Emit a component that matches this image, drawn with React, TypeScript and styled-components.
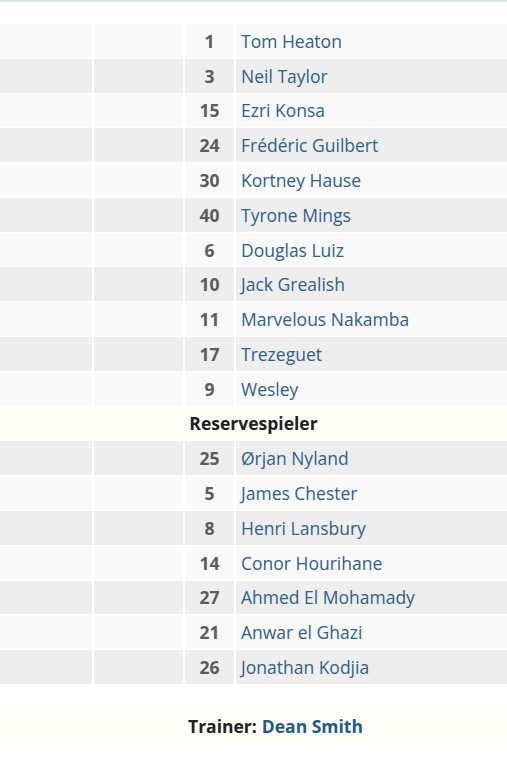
import React from "react";
import styled, { createGlobalStyle } from "styled-components";

const Global = createGlobalStyle`
  html, body { margin: 0; padding: 0; background: #fff; }
  body { font-family: "Open Sans", "Liberation Sans", sans-serif; }
`;

const Page = styled.div`
  width: 507px;
  border-top: 2px solid #d8e7ee;
  padding-top: 22px;
  box-sizing: border-box;
`;

const Table = styled.div`
  display: flex;
  flex-direction: column;
  gap: 1px;
`;

const Row = styled.div<{ $even: boolean }>`
  display: grid;
  grid-template-columns: 92px 89px 49px 271px;
  column-gap: 2px;
  height: 33.79px;
  & > div {
    background: ${(p) => (p.$even ? "#eeeeee" : "#f9f9f9")};
  }
`;

const Cell = styled.div`
  display: flex;
  align-items: center;
`;

const Num = styled(Cell)`
  justify-content: center;
  font-size: 17.5px;
  font-weight: 700;
  color: #5b5b5b;
`;

const Name = styled(Cell)`
  padding-left: 5px;
  font-size: 17.5px;
  color: #2e5f8c;
`;

const Header = styled.div`
  height: 33.79px;
  background: #fefef6;
  display: flex;
  align-items: center;
  justify-content: center;
  font-size: 17.5px;
  font-weight: 700;
  color: #202122;
`;

const Trainer = styled.div`
  margin-top: 26px;
  height: 33px;
  background: #fefef6;
  display: flex;
  align-items: center;
  justify-content: center;
  padding-left: 44px;
  font-size: 17.5px;
  font-weight: 700;
  color: #202122;
`;

const Coach = styled.span`
  color: #1e5a8c;
  margin-left: 5px;
`;

const starters: [string, string][] = [
  ["1", "Tom Heaton"],
  ["3", "Neil Taylor"],
  ["15", "Ezri Konsa"],
  ["24", "Frédéric Guilbert"],
  ["30", "Kortney Hause"],
  ["40", "Tyrone Mings"],
  ["6", "Douglas Luiz"],
  ["10", "Jack Grealish"],
  ["11", "Marvelous Nakamba"],
  ["17", "Trezeguet"],
  ["9", "Wesley"],
];

const reserves: [string, string][] = [
  ["25", "Ørjan Nyland"],
  ["5", "James Chester"],
  ["8", "Henri Lansbury"],
  ["14", "Conor Hourihane"],
  ["27", "Ahmed El Mohamady"],
  ["21", "Anwar el Ghazi"],
  ["26", "Jonathan Kodjia"],
];

const PlayerRow = ({ n, name, even }: { n: string; name: string; even: boolean }) => (
  <Row $even={even}>
    <Cell />
    <Cell />
    <Num>{n}</Num>
    <Name>{name}</Name>
  </Row>
);

export default function App() {
  return (
    <Page>
      <Global />
      <Table>
        {starters.map(([n, name], i) => (
          <PlayerRow key={n} n={n} name={name} even={i % 2 === 1} />
        ))}
        <Header>Reservespieler</Header>
        {reserves.map(([n, name], i) => (
          <PlayerRow key={n} n={n} name={name} even={i % 2 === 0} />
        ))}
      </Table>
      <Trainer>
        Trainer:<Coach>Dean Smith</Coach>
      </Trainer>
    </Page>
  );
}
